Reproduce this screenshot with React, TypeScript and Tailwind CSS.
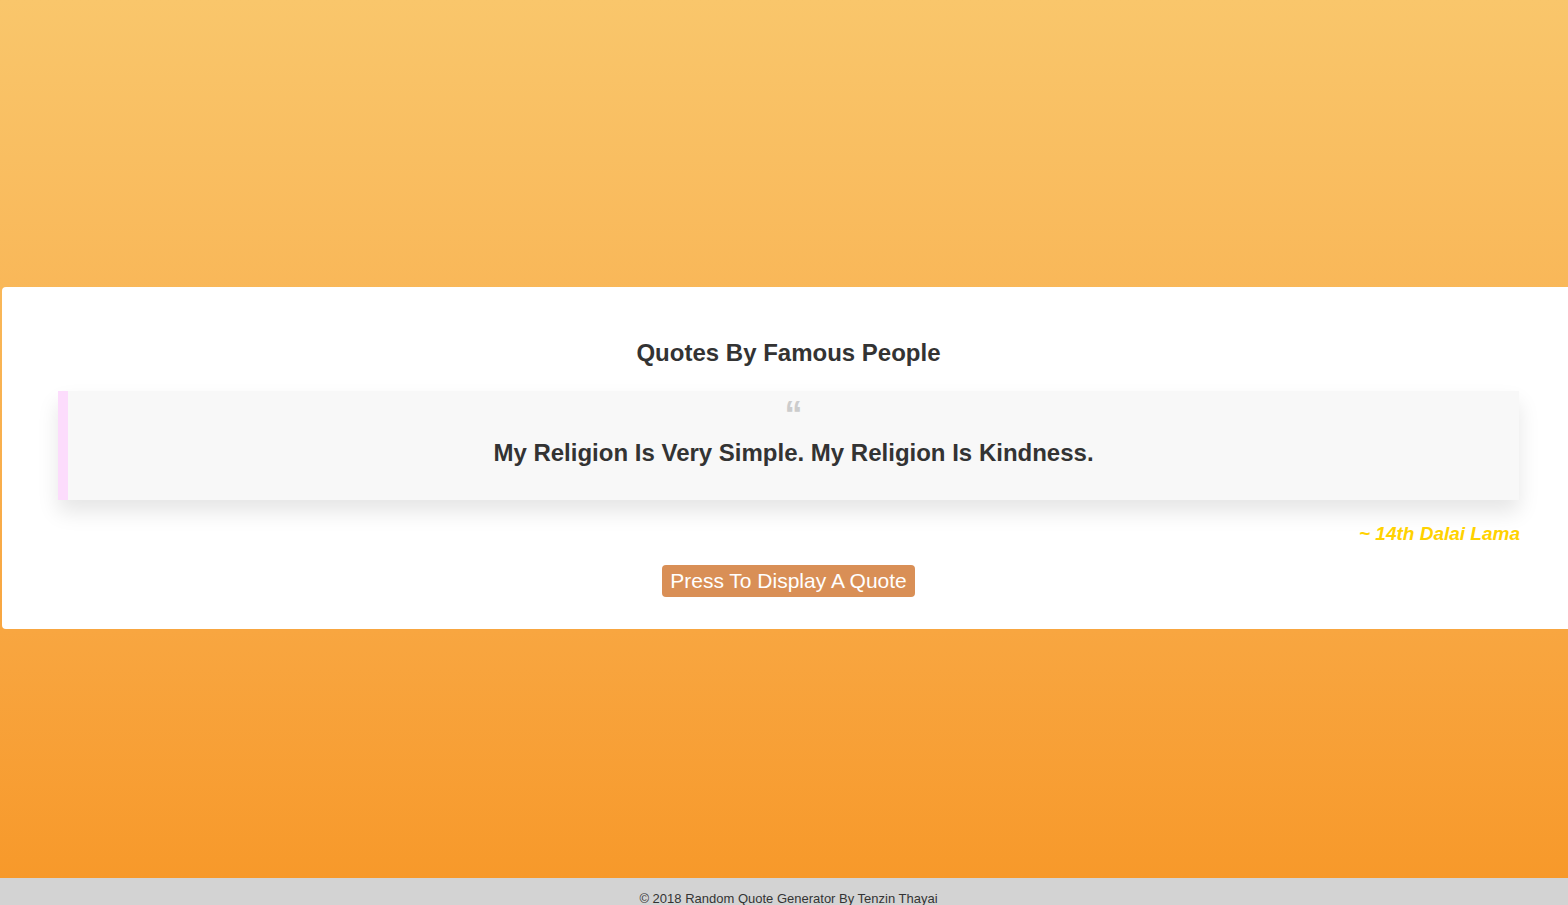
export default function App() {
  return (
    <div className="min-h-screen w-full overflow-hidden flex flex-col font-['Liberation_Sans',Arial,sans-serif]">
      <main className="h-[878px] bg-gradient-to-b from-[#f9c66b] to-[#f7992a] pt-[287px]">
        <div className="ml-[2px] w-[1573px] bg-white rounded-[4px] px-[56px] pt-[52px] pb-[32px] flex flex-col items-center">
          <h1 className="text-[24px] leading-[28px] font-bold text-[#333]">Quotes By Famous People</h1>
          <div className="mt-[24px] w-full bg-[#f8f8f8] border-l-[10px] border-[#fcdcfc] pt-[6px] pb-[33px] shadow-[0_12px_20px_rgba(0,0,0,0.1)] flex flex-col items-center">
            <span className="text-[36px] leading-none font-bold text-[#cccccc] h-[36px]">“</span>
            <p className="mt-[5px] text-[24px] leading-[29px] font-bold text-[#333]">
              My Religion Is Very Simple. My Religion Is Kindness.
            </p>
          </div>
          <p className="self-end mr-[-1px] mt-[22px] text-[19px] leading-[24px] font-bold italic text-[#ffd200]">~ 14th Dalai Lama</p>
          <button className="mt-[19px] bg-[#d98f56] text-white text-[21px] leading-[24px] px-[8px] py-[4px] rounded-[4px]">
            Press To Display A Quote
          </button>
        </div>
      </main>
      <footer className="flex-1 bg-[#d3d3d3] pt-[13px] pb-[10px] pl-[9px] text-center text-[13px] leading-[15px] text-[#333]">
        © 2018 Random Quote Generator By Tenzin Thayai
      </footer>
    </div>
  );
}
